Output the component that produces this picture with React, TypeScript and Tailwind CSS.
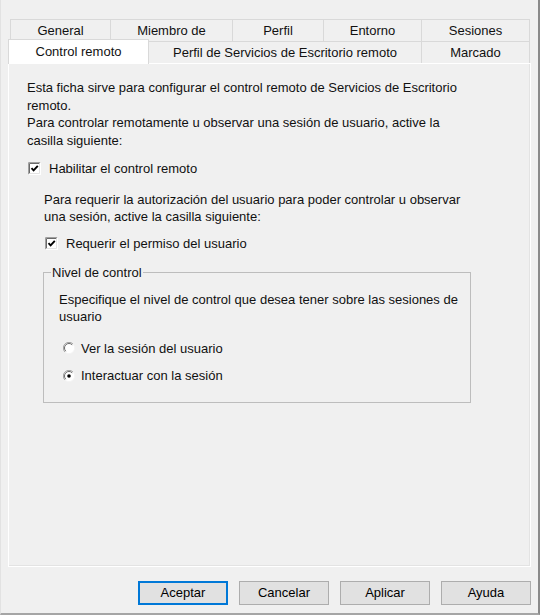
import React from "react";

const TOP_TABS = [
  { label: "General", w: "w-[101px]" },
  { label: "Miembro de", w: "w-[122px]" },
  { label: "Perfil", w: "w-[91px]" },
  { label: "Entorno", w: "w-[98px]" },
  { label: "Sesiones", w: "w-[108px]" },
];

function CheckBox() {
  return (
    <svg width="13" height="13" viewBox="0 0 13 13" className="shrink-0">
      <rect x="0" y="0" width="13" height="13" fill="#ffffff" />
      <path d="M0.5 12.5V0.5H12.5" stroke="#a0a0a0" fill="none" />
      <path d="M1.5 11.5V1.5H11.5" stroke="#696969" fill="none" />
      <path d="M0.5 12.5H12.5V0.5" stroke="#ffffff" fill="none" />
      <path d="M1.5 11.5H11.5V1.5" stroke="#e3e3e3" fill="none" />
      <path d="M3.5 6.2 5.6 8.4 9.8 3.8" stroke="#000" strokeWidth="1.9" fill="none" />
    </svg>
  );
}

function Radio({ checked }: { checked?: boolean }) {
  return (
    <svg width="12" height="12" viewBox="0 0 12 12" className="shrink-0">
      <circle cx="6" cy="6" r="5.5" fill="#ffffff" />
      <path d="M10 2A5.5 5.5 0 0 0 2 10" stroke="#a0a0a0" fill="none" />
      <path d="M9.2 2.8A4.5 4.5 0 0 0 2.8 9.2" stroke="#696969" fill="none" />
      <path d="M2 10A5.5 5.5 0 0 0 10 2" stroke="#f4f4f4" fill="none" />
      {checked && <circle cx="6" cy="6" r="1.8" fill="#000" />}
    </svg>
  );
}

function DlgButton({ label, primary }: { label: string; primary?: boolean }) {
  return (
    <button
      className={
        "w-[90px] h-[24px] bg-[#e1e1e1] text-[13px] text-black " +
        (primary ? "border-2 border-[#0078d7]" : "border border-[#adadad]")
      }
    >
      {label}
    </button>
  );
}

export default function App() {
  return (
    <div
      className="w-[544px] h-[616px] bg-white text-[#111] text-[13px] leading-[17.5px]"
      style={{ fontFamily: '"Liberation Sans", Arial, sans-serif' }}
    >
      <div className="w-[540px] h-[615px] bg-[#f0f0f0] border-r-2 border-r-[#8a8a8a] border-b-2 border-b-[#a5a5a5] border-l border-l-[#e2e2e2] flex flex-col pl-[7px] pt-[19px]">
        {/* tab headers */}
        <div className="flex ml-[2px] h-[22px]">
          {TOP_TABS.map((t, i) => (
            <div
              key={t.label}
              className={
                t.w +
                " h-[22px] flex items-center justify-center border-t border-r border-[#d9d9d9] " +
                (i === 0 ? "border-l" : "")
              }
            >
              {t.label}
            </div>
          ))}
        </div>
        <div className="flex h-[22px] relative z-10">
          <div className="w-[141px] h-[25px] -mt-[2px] bg-white border-t border-l border-r border-[#d9d9d9] flex items-center justify-center pb-[1px]">
            Control remoto
          </div>
          <div className="w-[273px] h-[22px] flex items-center justify-center border-t border-r border-[#d9d9d9]">
            Perfil de Servicios de Escritorio remoto
          </div>
          <div className="w-[108px] h-[22px] flex items-center justify-center border-t border-r border-[#d9d9d9]">
            Marcado
          </div>
        </div>

        {/* tab page */}
        <div className="w-[523px] h-[504px] border border-white shadow-[inset_-1px_-1px_0_#e3e3e3] pl-[18px] pt-[15px] pr-[40px]">
          <p className="w-[450px]">
            Esta ficha sirve para configurar el control remoto de Servicios de Escritorio remoto.
            <br />
            Para controlar remotamente u observar una sesión de usuario, active la casilla siguiente:
          </p>
          <label className="flex items-center gap-[8px] ml-[1px] mt-[11px]">
            <CheckBox />
            <span>Habilitar el control remoto</span>
          </label>
          <p className="ml-[17px] mt-[13px] w-[440px]">
            Para requerir la autorización del usuario para poder controlar u observar una sesión, active la casilla siguiente:
          </p>
          <label className="flex items-center gap-[8px] ml-[18px] mt-[9px]">
            <CheckBox />
            <span>Requerir el permiso del usuario</span>
          </label>
          <fieldset className="ml-[16px] mt-[12px] w-[428px] h-[139px] border border-[#bdbdbd] pl-[15px] pr-[6px]">
            <legend className="-ml-[8px] px-[1px]">Nivel de control</legend>
            <p className="mt-[9px]">
              Especifique el nivel de control que desea tener sobre las sesiones de usuario
            </p>
            <label className="flex items-center gap-[6px] ml-[4px] mt-[14px]">
              <Radio />
              <span>Ver la sesión del usuario</span>
            </label>
            <label className="flex items-center gap-[6px] ml-[4px] mt-[10px]">
              <Radio checked />
              <span>Interactuar con la sesión</span>
            </label>
          </fieldset>
        </div>

        {/* buttons */}
        <div className="flex justify-end gap-[11px] mt-[14px] pr-[7px]">
          <DlgButton label="Aceptar" primary />
          <DlgButton label="Cancelar" />
          <DlgButton label="Aplicar" />
          <DlgButton label="Ayuda" />
        </div>
      </div>
    </div>
  );
}
